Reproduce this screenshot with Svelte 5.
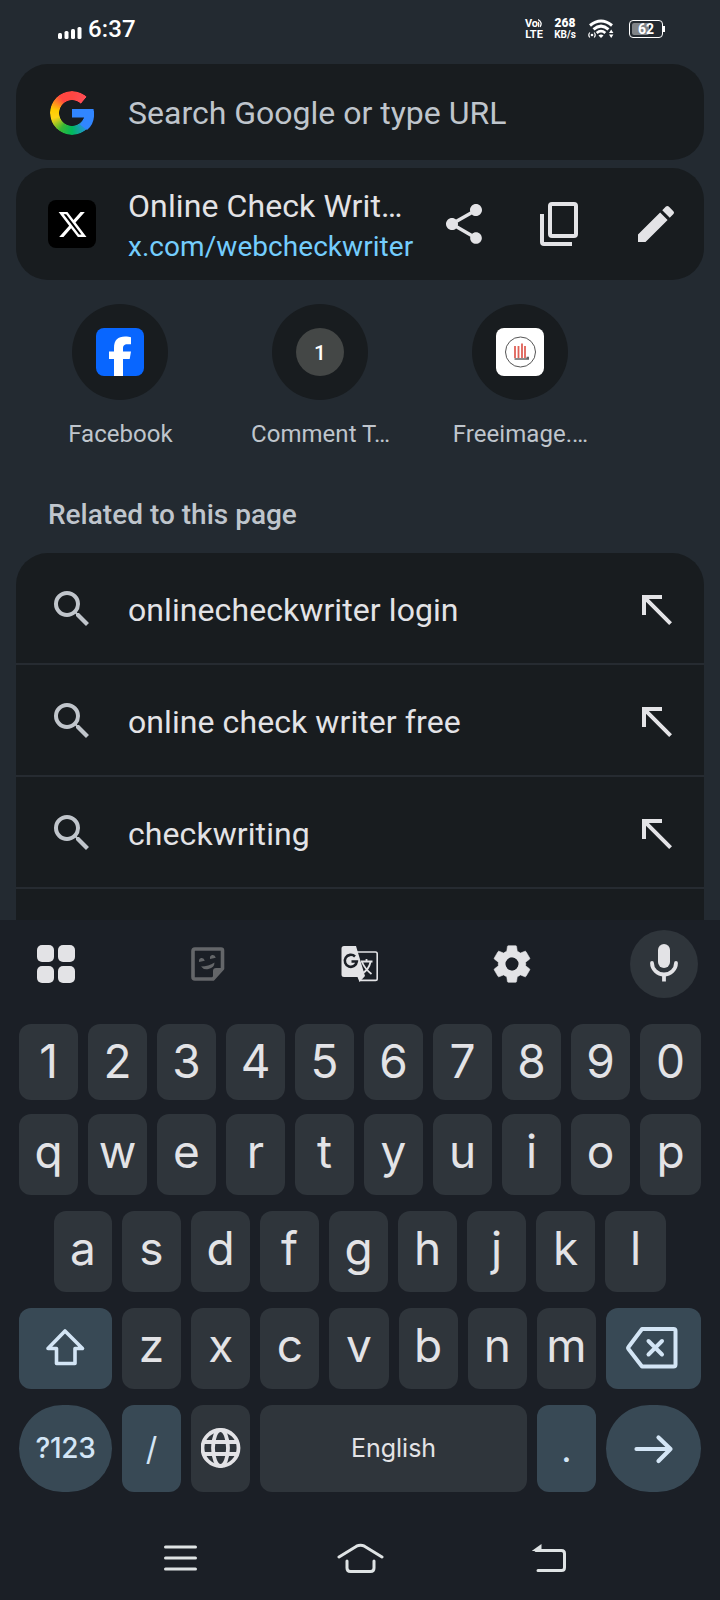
<script>
	const sites = [
		{ name: "Facebook", icon: "facebook" },
		{ name: "Comment T…", icon: "one" },
		{ name: "Freeimage.…", icon: "freeimage" },
	];

	const suggestions = [
		"onlinecheckwriter login",
		"online check writer free",
		"checkwriting",
	];

	const digits = "1234567890".split("");
	const topRow = "qwertyuiop".split("");
	const midRow = "asdfghjkl".split("");
	const bottomRow = "zxcvbnm".split("");
</script>

<main>
	<header class="status">
		<svg class="signal" width="24" height="14" viewBox="0 0 24 14" fill="#fff">
			<rect x="0" y="7" width="4" height="6" rx="1.5" />
			<rect x="6.5" y="5" width="4" height="8" rx="1.5" />
			<rect x="13" y="3" width="4" height="10" rx="1.5" />
			<rect x="19.5" y="1" width="4" height="12" rx="1.5" />
		</svg>
		<span class="time">6:37</span>
		<div class="volte">
			<span class="vo">Vo<svg width="5" height="10" viewBox="0 0 5 10" fill="none" stroke="#fff" stroke-width="1.3"><path d="M0 4q1.500 2 0 5M0 1.500q5 3 2 7.500" /></svg></span>
			<span>LTE</span>
		</div>
		<div class="speed">
			<b>268</b>
			<span>KB/s</span>
		</div>
		<svg class="wifi" width="26" height="20" viewBox="0 0 26 20" fill="none" stroke="#fff">
			<path d="M2 6.500Q13-2.500 24 6.500" stroke-width="3" />
			<path d="M5.500 10.300Q13 4 20.500 10.300" stroke-width="3" />
			<path d="M8.700 14Q13 10.200 17.300 14" stroke-width="2.800" />
			<path d="M10.500 16.500Q13 14.500 15.500 16.500L13 19z" fill="#fff" stroke="none" />
			<circle cx="4" cy="16" r="1.300" fill="#fff" stroke="none" />
			<path d="M1.800 13.500q-2 2.500 0 5M6.200 13.500q2 2.500 0 5" stroke-width="1.200" />
			<path d="M21 14l2.200-3.500 2.200 3.500zM21 15.500l2.200 3.500 2.200-3.500z" fill="#fff" stroke="none" />
		</svg>
		<div class="battery"><i></i><b>62</b></div>
	</header>

	<section class="search">
		<svg width="44" height="44" viewBox="0 0 44 44">
			<foreignObject width="44" height="44"><div class="ring"></div></foreignObject>
			<path d="M22 18h21.500q2.500 14-6.500 21l-7-5.500q4-3 5-7H22z" fill="#3186ff" />
		</svg>
		<span>Search Google or type URL</span>
	</section>

	<section class="current">
		<div class="xlogo">
			<svg width="31" height="31" viewBox="0 0 24 24" fill="#fff">
				<path d="M18.244 2.250h3.308l-7.227 8.260 8.502 11.240H16.170l-5.214-6.817L4.990 21.750H1.680l7.730-8.835L1.254 2.250H8.080l4.713 6.231zm-1.161 17.520h1.833L7.084 4.126H5.117z" />
			</svg>
		</div>
		<div class="page">
			<p>Online Check Writ…</p>
			<a href="https://x.com/webcheckwriter">x.com/webcheckwriter</a>
		</div>
		<svg width="48" height="48" viewBox="0 0 24 24" fill="#e3e3e6">
			<path d="M18 16.080c-.760 0-1.440.300-1.960.770L8.910 12.700c.050-.230.090-.460.090-.700s-.040-.470-.090-.700l7.050-4.110c.540.500 1.250.810 2.040.810 1.660 0 3-1.340 3-3s-1.340-3-3-3-3 1.340-3 3c0 .240.040.470.090.700L8.040 9.810C7.500 9.310 6.790 9 6 9c-1.660 0-3 1.340-3 3s1.340 3 3 3c.790 0 1.500-.310 2.040-.810l7.120 4.160c-.050.210-.080.430-.080.650 0 1.610 1.310 2.920 2.920 2.920s2.920-1.310 2.920-2.920-1.310-2.920-2.920-2.920z" />
		</svg>
		<svg width="48" height="48" viewBox="0 0 24 24" fill="none" stroke="#e3e3e6" stroke-width="2">
			<rect x="7" y="2" width="13" height="16" rx="1" />
			<path d="M3 7v14q0 1 1 1h14" />
		</svg>
		<svg width="48" height="48" viewBox="0 0 24 24" fill="#e3e3e6">
			<path d="M3 17.250V21h3.750L17.810 9.940l-3.750-3.750zM20.710 7.040a1 1 0 0 0 0-1.410l-2.340-2.340a1 1 0 0 0-1.410 0l-1.830 1.830 3.750 3.750z" />
		</svg>
	</section>

	<section class="sites">
		{#each sites as site}
			<div class="site">
				<div class="circle">
					{#if site.icon === "facebook"}
						<svg width="48" height="48" viewBox="0 0 48 48">
							<rect width="48" height="48" rx="8" fill="#0866ff" />
							<path d="M18 48V31h-5v-7.500h5V20c0-8 4-11.500 11-11.500 2.500 0 5 .300 6 .700v7h-3.500c-3.500 0-4.500 1.500-4.500 4.500v2.800h8L33.700 31H27v17z" fill="#fff" />
						</svg>
					{:else if site.icon === "one"}
						<span class="one">1</span>
					{:else}
						<svg width="48" height="48" viewBox="0 0 48 48" fill="none">
							<rect width="48" height="48" rx="8" fill="#fff" />
							<circle cx="24.500" cy="24" r="15" stroke="#555" />
							<path d="M19 18v12M22.500 18v12M26 15.500V30M29 18v12" stroke="#df6157" stroke-width="1.800" />
							<path d="M18.500 31H33M30.500 29.500H33" stroke="#666" stroke-width="1.500" />
						</svg>
					{/if}
				</div>
				<span class="label">{site.name}</span>
			</div>
		{/each}
	</section>

	<h2>Related to this page</h2>

	<ul>
		{#each suggestions as text}
			<li>
				<svg width="48" height="48" viewBox="0 0 24 24" fill="#c0c5cb">
					<path d="M15.500 14h-.790l-.280-.270A6.471 6.471 0 0 0 16 9.500 6.500 6.500 0 1 0 9.500 16c1.610 0 3.090-.590 4.230-1.570l.270.280v.790l5 4.990L20.490 19zm-6 0C7.010 14 5 11.990 5 9.500S7.010 5 9.500 5 14 7.010 14 9.500 11.990 14 9.500 14z" />
				</svg>
				<span>{text}</span>
				<svg width="48" height="48" viewBox="0 0 24 24" fill="#e3e3e6">
					<path d="M5 15h2V8.410L18.590 20 20 18.590 8.410 7H15V5H5z" />
				</svg>
			</li>
		{/each}
	</ul>

	<section class="keyboard">
		<div class="tools">
			<svg width="40" height="40" viewBox="0 0 40 40" fill="#e3e3e6">
				<rect x="1" y="1" width="17" height="17" rx="5" />
				<rect x="22" y="1" width="17" height="17" rx="5" />
				<rect x="1" y="22" width="17" height="17" rx="5" />
				<rect x="22" y="22" width="17" height="17" rx="5" />
			</svg>
			<svg width="40" height="40" viewBox="0 0 40 40" fill="#646669">
				<path d="M7 5h26q1.500 0 1.500 1.500v18L25 35H7q-2 0-2-2V7q0-2 2-2z" fill="none" stroke="#646669" stroke-width="3.600" stroke-linejoin="round" />
				<path d="M35 24h-7q-3 0-3 3v9z" />
				<path d="M11 18q-.500-3.500 2.200-4t3.600 2.800zM22 15q-.500-3.500 2.200-4t3.600 2.800z" />
				<path d="M13 22.500q7.500 0 13.500-4 0 5-6 6.500-5 1-7.500-2.500z" />
			</svg>
			<svg width="40" height="40" viewBox="0 0 40 40">
				<path d="M15 8h20.500q1.700 0 1.700 1.700v25q0 1.700-1.700 1.700H20z" fill="none" stroke="#e3e3e6" stroke-width="1.600" />
				<path d="M4 2h12l1.500 5L25 32l-5.500 6-2-5H4q-2.500 0-2.500-2.500v-26Q1.500 2 4 2z" fill="#e3e3e6" />
				<path d="M15 12.500a6 6 0 1 0 1.800 5H11.500" fill="none" stroke="#1b1f26" stroke-width="2.600" />
				<path d="M21 17.500h11.500M26.500 15v2.500M22 18q3 7 9.500 12M30.500 18q-1.500 7-7.500 11" fill="none" stroke="#e3e3e6" stroke-width="1.800" />
			</svg>
			<svg width="44" height="44" viewBox="0 0 24 24" fill="#e3e3e6">
				<path d="M19.430 12.980c.040-.320.070-.640.070-.980s-.030-.660-.070-.980l2.110-1.650c.190-.150.240-.420.120-.640l-2-3.460c-.120-.220-.390-.300-.610-.220l-2.490 1c-.520-.400-1.080-.730-1.690-.980l-.380-2.650A.488.488 0 0 0 14 2h-4c-.250 0-.460.180-.490.420l-.380 2.650c-.610.250-1.170.590-1.690.980l-2.490-1c-.230-.090-.490 0-.610.220l-2 3.460c-.130.220-.070.490.120.640l2.110 1.650c-.040.320-.070.650-.070.980s.030.660.070.980l-2.110 1.650c-.190.150-.240.420-.120.640l2 3.460c.120.220.390.300.610.220l2.490-1c.520.400 1.080.730 1.690.980l.380 2.650c.030.240.240.420.490.420h4c.250 0 .460-.180.490-.420l.380-2.650c.610-.250 1.170-.590 1.690-.980l2.490 1c.230.090.490 0 .610-.220l2-3.460c.120-.220.070-.490-.120-.640zM12 15.500A3.500 3.500 0 1 1 12 8.500a3.500 3.500 0 0 1 0 7z" stroke="#e3e3e6" stroke-width=".3" />
				<circle cx="12" cy="12" r="3.500" fill="#1b1f26" />
			</svg>
			<div class="mic">
				<svg width="40" height="40" viewBox="0 0 40 40" fill="none" stroke="#e3e3e6">
					<path d="M20 6v12" stroke-width="12" stroke-linecap="round" />
					<path d="M8 19a12 11.500 0 0 0 24 0" stroke-width="3.800" stroke-linecap="round" />
					<path d="M20 31v6.500" stroke-width="3.800" />
				</svg>
			</div>
		</div>

		<div class="row even digits">
			{#each digits as key}<button>{key}</button>{/each}
		</div>
		<div class="row even">
			{#each topRow as key}<button>{key}</button>{/each}
		</div>
		<div class="row even mid">
			{#each midRow as key}<button>{key}</button>{/each}
		</div>
		<div class="row">
			<button class="shift accent" aria-label="Shift">
				<svg width="40" height="40" viewBox="0 0 40 40" fill="none" stroke="#d3e5f5" stroke-width="3.600" stroke-linejoin="round">
					<path d="M19 4L36.500 21.500H29V36.500H10.500V21.500H2z" />
				</svg>
			</button>
			{#each bottomRow as key}<button>{key}</button>{/each}
			<button class="side accent" aria-label="Backspace">
				<svg width="54" height="44" viewBox="0 0 54 44" fill="none" stroke="#d3e5f5" stroke-width="4" stroke-linejoin="round" stroke-linecap="round">
					<path d="M16 4h31.500q2 0 2 2v33.500q0 2-2 2H16L2.500 24q-.800-1 0-2z" />
					<path d="M22.500 16l13.500 13.500M36 16L22.500 29.500" />
				</svg>
			</button>
		</div>
		<div class="row last">
			<button class="shift accent round symbols">?123</button>
			<button class="accent slash">/</button>
			<button aria-label="Language">
				<svg width="40" height="42" viewBox="1 1 40 42" fill="none" stroke="#e3e3e6" stroke-width="3.800">
					<circle cx="20.500" cy="21" r="18" />
					<ellipse cx="20.500" cy="21" rx="7.500" ry="18" />
					<path d="M3.500 15h34M3.500 27h34" />
				</svg>
			</button>
			<button class="space">English</button>
			<button class="accent dot">.</button>
			<button class="side accent round" aria-label="Go">
				<svg width="40" height="32" viewBox="0 0 40 32" fill="none" stroke="#d3e5f5" stroke-width="4.200" stroke-linecap="round" stroke-linejoin="round">
					<path d="M2.500 16h34M24.500 4.500l12 11.500-12 12" />
				</svg>
			</button>
		</div>

		<nav>
			<svg width="34" height="28" viewBox="0 0 34 28" stroke="#dfe3e4" stroke-width="3" stroke-linecap="round">
				<path d="M1.500 3h30M1.500 14h30M1.500 25h30" />
			</svg>
			<svg width="48" height="30" viewBox="0 0 48 30" fill="none" stroke="#dfe3e4" stroke-width="3" stroke-linecap="round">
				<path d="M3 14L20.500 3.200q4-2 8 0L46 14" />
				<path d="M11 18v7q0 3.500 3.500 3.500h20q3.500 0 3.500-3.500v-7" />
			</svg>
			<svg width="36" height="28" viewBox="0 0 36 28" fill="none" stroke="#dfe3e4" stroke-width="3" stroke-linecap="round">
				<path d="M4 6.500h25.500q3 0 3 3v14q0 3-3 3H6" />
				<path d="M-.500 7l10-7v7z" fill="#dfe3e4" stroke="none" />
			</svg>
		</nav>
	</section>
</main>

<style>
	:global(body) {
		background: #232a31;
	}

	main {
		width: 720px;
		height: 1600px;
		display: flex;
		flex-direction: column;
		overflow: hidden;
		background: #232a31;
		color: #e3e3e6;
		font-family: Roboto, sans-serif;
	}

	svg {
		display: block;
		flex: none;
	}

	.status {
		height: 64px;
		flex: none;
		box-sizing: border-box;
		padding: 0 55px 6px 58px;
		display: flex;
		align-items: center;
		color: #fff;
	}

	.signal {
		margin-top: 7px;
	}

	.time {
		margin-left: 6px;
		font-size: 24px;
		font-weight: 500;
		letter-spacing: 0.1px;
	}

	.volte,
	.speed {
		display: flex;
		flex-direction: column;
		align-items: center;
		margin-top: -1px;
		font-size: 11px;
		font-weight: 700;
		line-height: 11px;
	}

	.volte {
		margin-left: auto;
		width: 18px;
	}

	.vo {
		display: flex;
	}

	.speed {
		width: 22px;
		margin-left: 11px;
		font-size: 10px;
	}

	.speed b {
		font-size: 12px;
	}

	.wifi {
		margin-left: 12px;
	}

	.battery {
		position: relative;
		width: 34px;
		height: 18px;
		box-sizing: border-box;
		margin: 0 2px 0 15px;
		border: 1.500px solid #fff;
		border-radius: 4px;
		text-align: center;
		font-size: 14px;
		line-height: 16px;
	}

	.battery i {
		position: absolute;
		left: 2px;
		top: 2px;
		width: 17px;
		height: 12px;
		border-radius: 2px;
		background: #808488;
	}

	.battery b {
		position: relative;
	}

	.battery::after {
		content: "";
		position: absolute;
		right: -3px;
		top: 5px;
		width: 2px;
		height: 6px;
		background: #fff;
	}

	.search,
	.current {
		flex: none;
		box-sizing: border-box;
		margin: 0 16px;
		background: #181c1f;
		border-radius: 32px;
		display: flex;
		align-items: center;
	}

	.search {
		height: 96px;
		padding: 1px 0 0 34px;
		color: #bfc5cc;
		font-size: 32px;
	}

	.search span {
		margin-left: 34px;
		padding-top: 1px;
	}

	.ring {
		width: 44px;
		height: 44px;
		border-radius: 50%;
		background: conic-gradient(#ff4641 0deg, #ff4d55 42deg, transparent 43deg, transparent 85deg, #3186ff 86deg, #3186ff 125deg, #00b95c 180deg, #3ab834 215deg, #ffd314 255deg, #ffcc00 280deg, #ff4641 325deg, #ff4641 360deg);
		mask: radial-gradient(circle, transparent 12.500px, #000 13.200px);
	}

	.current {
		height: 112px;
		margin-top: 8px;
		padding: 0 24px 0 32px;
	}

	.current > svg + svg {
		margin-left: 48px;
	}

	.xlogo {
		width: 48px;
		height: 48px;
		border-radius: 8px;
		background: #000;
		display: flex;
		align-items: center;
		justify-content: center;
	}

	.page {
		margin-left: 32px;
		padding-top: 4px;
		width: 312px;
		flex: none;
		white-space: nowrap;
	}

	.page p {
		margin: 0;
		font-size: 32px;
		line-height: 42px;
		letter-spacing: 0.1px;
	}

	.page a {
		display: block;
		color: #74cdfd;
		font-size: 28px;
		line-height: 40px;
		letter-spacing: 0.05px;
		text-decoration: none;
	}

	.sites {
		display: flex;
		flex: none;
		padding: 24px 0 0 20px;
	}

	.site {
		width: 200px;
		display: flex;
		flex-direction: column;
		align-items: center;
	}

	.circle {
		width: 96px;
		height: 96px;
		border-radius: 50%;
		background: #181c1f;
		display: flex;
		align-items: center;
		justify-content: center;
	}

	.one {
		width: 48px;
		height: 48px;
		border-radius: 50%;
		background: #444746;
		color: #fff;
		font-size: 21px;
		font-weight: 500;
		line-height: 50px;
		text-align: center;
	}

	.label {
		margin-top: 20px;
		padding-left: 1px;
		color: #bfc5cc;
		font-size: 24px;
		line-height: 28px;
		letter-spacing: 0.05px;
	}

	h2 {
		margin: 51px 48px 22px;
		color: #bfc5cc;
		font-size: 28px;
		font-weight: 500;
		line-height: 32px;
	}

	ul {
		flex: 1;
		min-height: 0;
		overflow: hidden;
		list-style: none;
		margin: 0 16px;
		padding: 0;
		background: #181c1f;
		border-radius: 32px 32px 0 0;
	}

	li {
		height: 112px;
		box-sizing: border-box;
		padding: 2px 24px 0 32px;
		border-bottom: 2px solid #262b31;
		display: flex;
		align-items: center;
		font-size: 32px;
		letter-spacing: 0.08px;
	}

	li span {
		flex: 1;
		margin-left: 32px;
		padding-top: 2px;
	}

	.keyboard {
		height: 680px;
		flex: none;
		box-sizing: border-box;
		padding: 0 19px;
		background: #1b1f26;
	}

	.tools {
		height: 88px;
		margin: 0 -57px 16px -39px;
		display: grid;
		grid-template-columns: repeat(5, 152px);
		align-items: center;
		justify-items: center;
	}

	.mic {
		width: 68px;
		height: 68px;
		border-radius: 50%;
		background: #2f353b;
		display: flex;
		align-items: center;
		justify-content: center;
	}

	.row {
		display: flex;
		gap: 10px;
		height: 81px;
		margin-bottom: 16px;
	}

	.digits {
		height: 76px;
		margin-bottom: 14px;
	}

	.mid {
		margin-left: 35px;
		margin-right: 35px;
	}

	.last {
		height: 87px;
	}

	button {
		flex: 1 1 0;
		min-width: 0;
		margin: 0;
		padding: 0 0 8px;
		border: 0;
		border-radius: 12px;
		background: #2f353b;
		color: #e3e3e6;
		font-family: Inter, sans-serif;
		font-size: 46px;
		line-height: 1;
		display: flex;
		align-items: center;
		justify-content: center;
	}

	.even button:not(:last-child) {
		flex: 0 0 59px;
	}

	.mid button:first-child:not(:last-child) {
		flex-basis: 58px;
	}

	.digits button {
		padding-bottom: 2px;
	}

	.accent {
		background: #384955;
		color: #d3e5f5;
	}

	.shift {
		flex: 0 0 93px;
		padding-bottom: 3px;
	}

	.side {
		flex: 0 0 95px;
		padding-bottom: 3px;
	}

	.last button {
		padding: 0;
	}

	.last .round {
		border-radius: 44px;
	}

	.last .symbols {
		font-size: 28px;
		font-weight: 500;
		letter-spacing: -0.3px;
		padding-bottom: 2px;
	}

	.last .slash {
		font-size: 32px;
	}

	.last .dot {
		font-size: 36px;
	}

	.last .space {
		flex: 0 0 267px;
		font-size: 25px;
	}

	nav {
		display: flex;
		align-items: center;
		height: 108px;
		margin-top: -4px;
		padding-left: 145px;
	}

	nav svg:nth-child(2) {
		margin-left: 138px;
	}

	nav svg:nth-child(3) {
		margin-left: 148px;
	}
</style>
